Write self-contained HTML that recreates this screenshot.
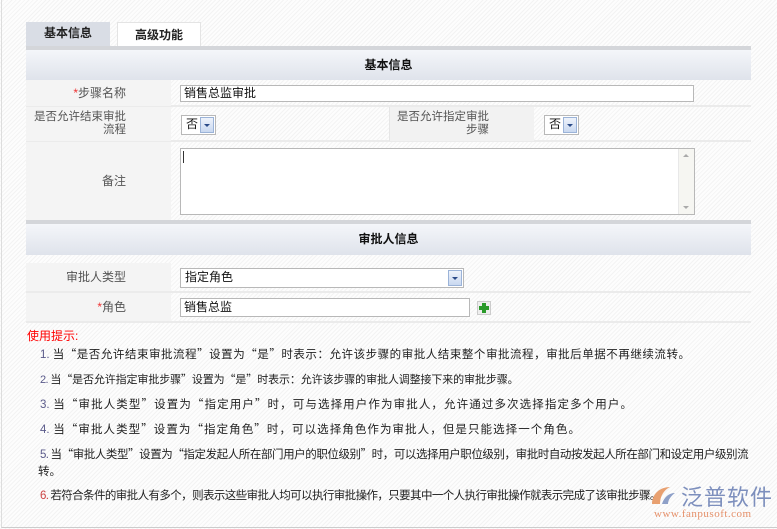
<!DOCTYPE html>
<html><head><meta charset="utf-8"><style>
*{margin:0;padding:0;box-sizing:border-box}
body{width:777px;height:529px;overflow:hidden;font-family:"Liberation Sans","Noto Sans CJK SC","WenQuanYi Zen Hei",sans-serif;font-size:12px;color:#222;
background:#fbfbfb repeating-linear-gradient(135deg,#fdfdfd 0,#fdfdfd 2px,#f3f3f3 2px,#f3f3f3 3px);position:relative}
.frame{position:absolute;left:1px;top:0;width:776px;height:528px;border-left:1px solid #ddd;border-bottom:1px solid #ccc}
.abs{position:absolute}
.tab{position:absolute;top:22px;height:26px;width:84px;text-align:center;font-weight:bold;line-height:22px;font-size:12px}
.hdr{position:absolute;left:26px;width:725px;background:linear-gradient(#f4f6fa,#dfe3eb);border-top:4px solid #d4d6da;text-align:center;font-weight:bold;font-size:12px;color:#111}
.lab{position:absolute;left:26px;width:145px;background:#f4f4f4;text-align:right;padding-right:45px;color:#555;font-size:12px}
.row{position:absolute;left:26px;width:725px;border-bottom:2px solid #ebebeb}
.inp{position:absolute;background:#fff;border:1px solid #b8b8b8;font-size:12px;padding-left:3px;line-height:15px;color:#111}
.sel{position:absolute;background:#fff;border:1px solid #b8b8b8;font-size:12px;padding-left:4px;line-height:17px;color:#111}
.arr{position:absolute;right:1px;top:1px;width:14px;bottom:1px;background:linear-gradient(#eef3fb,#c9d8f0);border:1px solid #9bb3d8}
.arr:after{content:"";position:absolute;left:3px;top:6px;border-left:3px solid transparent;border-right:3px solid transparent;border-top:3px solid #2a4a88}
.tip{position:absolute;left:40px;font-size:11.5px;color:#222;white-space:nowrap;font-family:"Noto Sans CJK SC","WenQuanYi Zen Hei",sans-serif;text-align:justify;text-align-last:justify;text-justify:inter-character}
.tip b{font-weight:normal;color:#5a5a8a;font-family:"Liberation Sans",sans-serif}
</style></head><body>
<div class="frame"></div>
<div class="tab" style="left:26px;background:#d9dde5">基本信息</div>
<div class="tab" style="left:117px;background:#fff;border:1px solid #e4e4e4;border-bottom:none;line-height:24px">高级功能</div>
<div class="hdr" style="top:46px;height:34px;line-height:30px">基本信息</div>

<div class="row" style="top:80px;height:27px"></div>
<div class="lab" style="top:80px;height:26px;line-height:26px"><span style="color:#e33">*</span>步骤名称</div>
<div class="inp" style="left:180px;top:85px;width:514px;height:17px">销售总监审批</div>

<div class="row" style="top:107px;height:35px"></div>
<div class="lab" style="top:107px;height:34px;line-height:13px;padding-top:4px;padding-right:45px;font-size:11.5px">是否允许结束审批<br>流程</div>
<div class="sel" style="left:181px;top:115px;width:35px;height:20px">否<div class="arr"></div></div>
<div class="abs" style="left:389px;top:107px;width:145px;height:34px;background:#f2f2f2;border-left:1px solid #e6e6e6;text-align:right;padding-right:45px;padding-top:4px;line-height:13px;color:#555;font-size:11.5px">是否允许指定审批<br>步骤</div>
<div class="sel" style="left:544px;top:115px;width:35px;height:20px">否<div class="arr"></div></div>

<div class="row" style="top:142px;height:78px;border-bottom:none"></div>
<div class="lab" style="top:142px;height:78px;line-height:78px">备注</div>
<div class="abs" style="left:180px;top:148px;width:515px;height:67px;background:#fff;border:1px solid #b8b8b8">
<div class="abs" style="left:2px;top:2px;width:1px;height:12px;background:#333"></div>
<div class="abs" style="right:0;top:0;width:16px;height:65px;background:#f6f6f2;border-left:1px solid #e8e8e8"></div>
<div class="abs" style="right:5px;top:5px;border-left:3px solid transparent;border-right:3px solid transparent;border-bottom:3px solid #aaa"></div>
<div class="abs" style="right:5px;bottom:5px;border-left:3px solid transparent;border-right:3px solid transparent;border-top:3px solid #aaa"></div>
</div>

<div class="hdr" style="top:220px;height:35px;line-height:31px">审批人信息</div>

<div class="row" style="top:263px;height:30px"></div>
<div class="lab" style="top:263px;height:28px;line-height:28px">审批人类型</div>
<div class="sel" style="left:180px;top:268px;width:284px;height:20px;padding-left:4px">指定角色<div class="arr"></div></div>

<div class="row" style="top:293px;height:30px"></div>
<div class="lab" style="top:293px;height:28px;line-height:28px"><span style="color:#e33">*</span>角色</div>
<div class="inp" style="left:180px;top:298px;width:290px;height:19px;line-height:17px">销售总监</div>
<div class="abs" style="left:477px;top:301px;width:14px;height:14px;background:#eee;border:1px solid #ccc"></div>
<div class="abs" style="left:482px;top:303px;width:4px;height:10px;background:#2a9a2a"></div>
<div class="abs" style="left:479px;top:306px;width:10px;height:4px;background:#2a9a2a"></div>

<div class="abs" style="left:27px;top:327px;color:#f00;font-size:12px">使用提示:</div>
<div class="tip" style="top:346px;width:650px"><b>1.</b> 当“是否允许结束审批流程”设置为“是”时表示：允许该步骤的审批人结束整个审批流程，审批后单据不再继续流转。</div>
<div class="tip" style="top:371px;width:478px;letter-spacing:-0.6px;font-size:11px"><b>2.</b> 当“是否允许指定审批步骤”设置为“是”时表示：允许该步骤的审批人调整接下来的审批步骤。</div>
<div class="tip" style="top:396px;width:592px"><b>3.</b> 当“审批人类型”设置为“指定用户”时，可与选择用户作为审批人，允许通过多次选择指定多个用户。</div>
<div class="tip" style="top:421px;width:540px"><b>4.</b> 当“审批人类型”设置为“指定角色”时，可以选择角色作为审批人，但是只能选择一个角色。</div>
<div class="tip" style="top:446px;width:708px;letter-spacing:-0.6px"><b>5.</b> 当“审批人类型”设置为“指定发起人所在部门用户的职位级别”时，可以选择用户职位级别，审批时自动按发起人所在部门和设定用户级别流</div>
<div class="tip" style="top:463px;left:38px;text-align:left;text-align-last:left">转。</div>
<div class="tip" style="top:487px;width:620px;letter-spacing:-0.6px"><b style="color:#c44">6.</b> 若符合条件的审批人有多个，则表示这些审批人均可以执行审批操作，只要其中一个人执行审批操作就表示完成了该审批步骤。</div>

<svg class="abs" style="left:648px;top:484px" width="30" height="24" viewBox="0 0 30 24"><path d="M4 20 C4 10 12 3 22 3 C16 6 12 12 12 20 Z" fill="#e8a070"/><path d="M14 20 C16 13 21 9 27 9 C23 12 20 16 20 20 Z" fill="#8ea0c8"/></svg>
<div class="abs" style="left:681px;top:480px;font-size:22px;color:#7d8fbd;letter-spacing:1px;font-family:'Noto Sans CJK SC',sans-serif">泛普软件</div>
<div class="abs" style="left:654px;top:508px;font-size:11px;color:#e5906a;font-family:'Liberation Serif',serif;letter-spacing:0.5px">www.fanpusoft.com</div>
</body></html>
